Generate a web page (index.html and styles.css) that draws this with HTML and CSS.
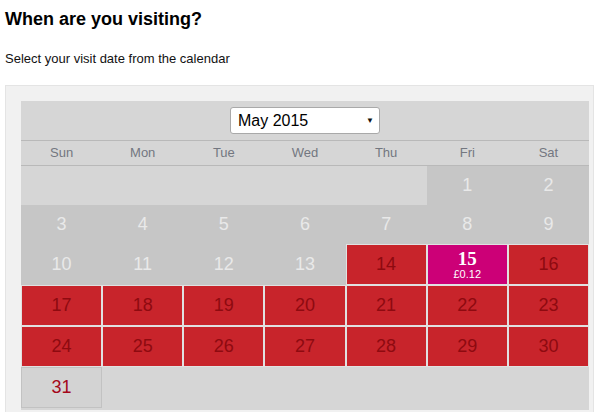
FILE: index.html
```html
<!DOCTYPE html>
<html lang="en">
<head>
    <meta charset="UTF-8">
    <title>When are you visiting?</title>
    <link rel="stylesheet" href="styles.css">
</head>
<body>
    <h1 class="title">When are you visiting?</h1>
    <p class="intro">Select your visit date from the calendar</p>

    <div class="picker">
        <div class="calendar">
            <div class="cal-head">
                <div class="month-select">
                    <select class="month">
                        <option>May 2015</option>
                        <option>June 2015</option>
                        <option>July 2015</option>
                    </select>
                    <span class="arrow">&#9660;</span>
                </div>
            </div>
            <div class="weekdays">
                <span>Sun</span><span>Mon</span><span>Tue</span><span>Wed</span><span>Thu</span><span>Fri</span><span>Sat</span>
            </div>
            <div class="days">
                <span class="day empty"></span>
                <span class="day empty"></span>
                <span class="day empty"></span>
                <span class="day empty"></span>
                <span class="day empty"></span>
                <span class="day past">1</span>
                <span class="day past">2</span>

                <span class="day past">3</span>
                <span class="day past">4</span>
                <span class="day past">5</span>
                <span class="day past">6</span>
                <span class="day past">7</span>
                <span class="day past">8</span>
                <span class="day past">9</span>

                <span class="day past">10</span>
                <span class="day past">11</span>
                <span class="day past">12</span>
                <span class="day past">13</span>
                <span class="day full">14</span>
                <span class="day selected"><b>15</b><small>&pound;0.12</small></span>
                <span class="day full">16</span>

                <span class="day full">17</span>
                <span class="day full">18</span>
                <span class="day full">19</span>
                <span class="day full">20</span>
                <span class="day full">21</span>
                <span class="day full">22</span>
                <span class="day full">23</span>

                <span class="day full">24</span>
                <span class="day full">25</span>
                <span class="day full">26</span>
                <span class="day full">27</span>
                <span class="day full">28</span>
                <span class="day full">29</span>
                <span class="day full">30</span>

                <span class="day open">31</span>
            </div>
        </div>
    </div>
</body>
</html>
```

FILE: styles.css
```css
* {
    box-sizing: border-box;
}

body {
    margin: 0;
    padding: 0 0 0 5px;
    font-family: "Liberation Sans", Arial, sans-serif;
    color: #000;
    background: #fff;
    overflow: hidden;
}

.title {
    margin: 9px 0 0;
    font-size: 18px;
    font-weight: bold;
    line-height: 20px;
}

.intro {
    margin: 22px 0 0;
    font-size: 13px;
    line-height: 15px;
    color: #111;
}

.picker {
    margin-top: 19px;
    width: 589px;
    padding: 15px 4px 15px 15px;
    background: #f1f1f1;
    border: 1px solid #e4e4e4;
}

.calendar {
    width: 568px;
    background: #d6d6d6;
}

.cal-head {
    height: 40px;
    display: flex;
    justify-content: center;
    align-items: center;
    border-bottom: 1px solid #b9b9b9;
}

.month-select {
    position: relative;
    width: 150px;
    height: 27px;
}

.month {
    width: 100%;
    height: 100%;
    padding: 0 0 0 7px;
    appearance: none;
    -webkit-appearance: none;
    background: #fff;
    border: 1px solid #a9a9a9;
    border-radius: 3px;
    font-family: "Liberation Sans", Arial, sans-serif;
    font-size: 16px;
    color: #000;
}

.month-select .arrow {
    position: absolute;
    right: 6px;
    top: 10px;
    font-size: 8px;
    line-height: 8px;
    color: #111;
    pointer-events: none;
}

.weekdays {
    display: grid;
    grid-template-columns: repeat(7, 1fr);
    height: 25px;
    border-bottom: 1px solid #b9b9b9;
}

.weekdays span {
    text-align: center;
    font-size: 13px;
    line-height: 24px;
    color: #737780;
}

.days {
    display: grid;
    grid-template-columns: repeat(7, 1fr);
    grid-template-rows: 39px 39px 41px 41px 41px 41px;
    padding-bottom: 2px;
}

.day {
    display: flex;
    flex-direction: column;
    justify-content: center;
    align-items: center;
    font-size: 18px;
    border: 1px solid #e1e1e1;
}

.day.empty {
    border-color: #d6d6d6;
}

.day.past {
    background: #c6c6c6;
    border-color: #c6c6c6;
    color: #e9e9e9;
}

.day.full {
    background: #c8242b;
    color: #8e0a10;
}

.day.selected {
    background: #cc0077;
    color: #fff;
}

.day.selected b {
    font-family: "Liberation Serif", "Times New Roman", serif;
    font-size: 19px;
    line-height: 19px;
}

.day.selected small {
    font-size: 11px;
    line-height: 12px;
}

.day.open {
    background: #d3d3d3;
    border-color: #c2c2c2;
    color: #a4081a;
}
```
